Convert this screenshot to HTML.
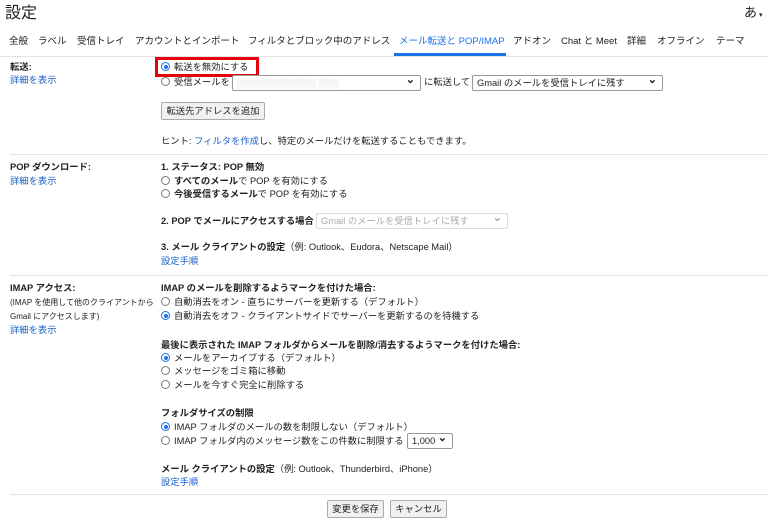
<!DOCTYPE html>
<html><head><meta charset="utf-8"><style>
*{margin:0;padding:0;box-sizing:border-box}
body{width:768px;height:521px;background:#fff;position:relative;overflow:hidden;font-family:"Liberation Sans","Noto Sans CJK JP",sans-serif;font-size:9.3px;color:#222}
.a{position:absolute;white-space:nowrap;line-height:13px}
.l{color:#1a5fc8}
b{font-weight:bold}
.hr{position:absolute;left:10px;right:0;height:1px;background:#e3e3e3}
.r{display:inline-block;width:9px;height:9px;border:1px solid #777;border-radius:50%;vertical-align:-1px;margin-right:4px;position:relative;background:#fff}
.r.on{border-color:#1a73e8}
.r.on:after{content:"";position:absolute;left:1.5px;top:1.5px;width:4px;height:4px;border-radius:50%;background:#1a73e8}
.sel{position:absolute;height:16px;border:1px solid #999;border-radius:2px;background:#fff;font-size:9.3px;line-height:14px;padding-left:4px}
.sel:after{content:"⌄";position:absolute;right:5px;top:-3px;font-size:11px;font-weight:bold}
.btn{position:absolute;height:18px;border:1px solid #aaa;border-radius:2px;background:#f1f1f1;text-align:center;line-height:16px;font-size:9.3px}
.tab{position:absolute;top:35px;font-size:9.5px;line-height:13px;color:#222}
</style></head><body>
<div class="a" style="left:5px;top:5px;font-size:16px;line-height:18px">設定</div>
<div class="a" style="left:744px;top:6px;font-size:13px">あ<span style="font-size:7px"> ▾</span></div>
<div class="tab" style="left:9px">全般</div>
<div class="tab" style="left:38px">ラベル</div>
<div class="tab" style="left:77px">受信トレイ</div>
<div class="tab" style="left:135px">アカウントとインポート</div>
<div class="tab" style="left:248px">フィルタとブロック中のアドレス</div>
<div class="tab" style="left:399px;color:#1a73e8">メール転送と POP/IMAP</div>
<div class="tab" style="left:513px">アドオン</div>
<div class="tab" style="left:561px">Chat と Meet</div>
<div class="tab" style="left:627px">詳細</div>
<div class="tab" style="left:657px">オフライン</div>
<div class="tab" style="left:716px">テーマ</div>
<div style="position:absolute;left:394px;top:53px;width:112px;height:3px;background:#1a73e8"></div>
<div class="hr" style="top:56px;left:0"></div>

<div class="a" style="left:10px;top:61px"><b>転送:</b></div>
<div class="a l" style="left:10px;top:74px">詳細を表示</div>
<div style="position:absolute;left:155px;top:57px;width:104px;height:20px;border:3px solid #e8000b"></div>
<div class="a" style="left:161px;top:61px"><span class="r on"></span>転送を無効にする</div>
<div class="a" style="left:161px;top:76px"><span class="r"></span>受信メールを</div>
<div class="sel" style="left:232px;top:75px;width:189px"><span style="color:#ddd">▒▒▒▒▒▒▒▒▒▒▒▒ ▒▒▒</span></div>
<div class="a" style="left:424px;top:76px">に転送して</div>
<div class="sel" style="left:472px;top:75px;width:191px">Gmail のメールを受信トレイに残す</div>
<div class="btn" style="left:161px;top:102px;width:104px">転送先アドレスを追加</div>
<div class="a" style="left:161px;top:135px">ヒント: <span class="l">フィルタを作成</span>し、特定のメールだけを転送することもできます。</div>
<div class="hr" style="top:154px"></div>

<div class="a" style="left:10px;top:161px"><b>POP ダウンロード:</b></div>
<div class="a l" style="left:10px;top:175px">詳細を表示</div>
<div class="a" style="left:161px;top:161px"><b>1. ステータス: POP 無効</b></div>
<div class="a" style="left:161px;top:175px"><span class="r"></span><b>すべてのメール</b>で POP を有効にする</div>
<div class="a" style="left:161px;top:188px"><span class="r"></span><b>今後受信するメール</b>で POP を有効にする</div>
<div class="a" style="left:161px;top:215px"><b>2. POP でメールにアクセスする場合</b></div>
<div class="sel" style="left:316px;top:213px;width:192px;color:#aaa;border-color:#ddd">Gmail のメールを受信トレイに残す</div>
<div class="a" style="left:161px;top:241px"><b>3. メール クライアントの設定</b>（例: Outlook、Eudora、Netscape Mail）</div>
<div class="a l" style="left:161px;top:255px">設定手順</div>
<div class="hr" style="top:275px"></div>

<div class="a" style="left:10px;top:282px"><b>IMAP アクセス:</b></div>
<div class="a" style="left:10px;top:296px;font-size:8px">(IMAP を使用して他のクライアントから</div>
<div class="a" style="left:10px;top:310px;font-size:8px">Gmail にアクセスします)</div>
<div class="a l" style="left:10px;top:324px">詳細を表示</div>
<div class="a" style="left:161px;top:282px"><b>IMAP のメールを削除するようマークを付けた場合:</b></div>
<div class="a" style="left:161px;top:296px"><span class="r"></span>自動消去をオン - 直ちにサーバーを更新する（デフォルト）</div>
<div class="a" style="left:161px;top:310px"><span class="r on"></span>自動消去をオフ - クライアントサイドでサーバーを更新するのを待機する</div>
<div class="a" style="left:161px;top:339px"><b>最後に表示された IMAP フォルダからメールを削除/消去するようマークを付けた場合:</b></div>
<div class="a" style="left:161px;top:352px"><span class="r on"></span>メールをアーカイブする（デフォルト）</div>
<div class="a" style="left:161px;top:365px"><span class="r"></span>メッセージをゴミ箱に移動</div>
<div class="a" style="left:161px;top:379px"><span class="r"></span>メールを今すぐ完全に削除する</div>
<div class="a" style="left:161px;top:407px"><b>フォルダサイズの制限</b></div>
<div class="a" style="left:161px;top:421px"><span class="r on"></span>IMAP フォルダのメールの数を制限しない（デフォルト）</div>
<div class="a" style="left:161px;top:435px"><span class="r"></span>IMAP フォルダ内のメッセージ数をこの件数に制限する</div>
<div class="sel" style="left:407px;top:433px;width:46px">1,000</div>
<div class="a" style="left:161px;top:463px"><b>メール クライアントの設定</b>（例: Outlook、Thunderbird、iPhone）</div>
<div class="a l" style="left:161px;top:476px">設定手順</div>
<div class="hr" style="top:494px"></div>
<div class="btn" style="left:327px;top:500px;width:57px">変更を保存</div>
<div class="btn" style="left:390px;top:500px;width:57px">キャンセル</div>
</body></html>
